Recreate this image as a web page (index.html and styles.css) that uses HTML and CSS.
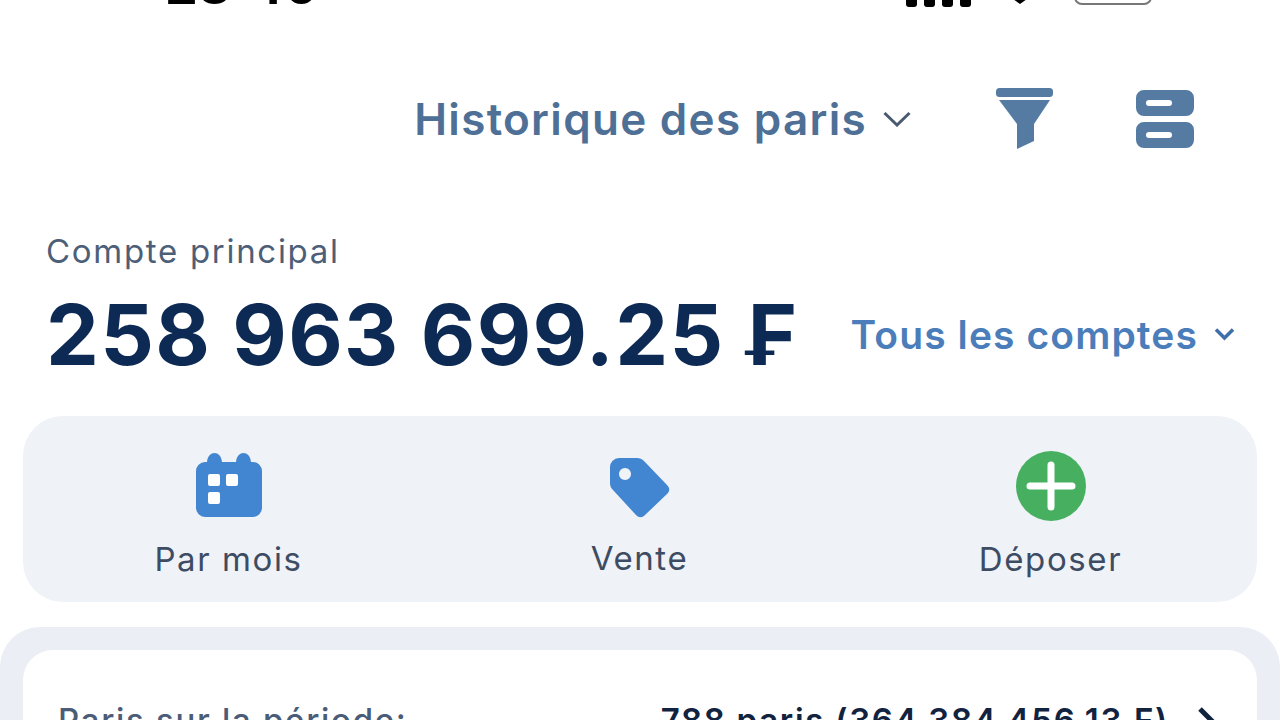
FILE: index.html
```html
<!DOCTYPE html>
<html>
  <head>
    <title>Historique des paris</title>
    <link rel="stylesheet" href="styles.css">
  </head>
  <body>
    <div class="status-bar">
      <span class="status-time">23:40</span>
      <div class="status-right">
        <div class="signal"><i></i><i></i><i></i><i></i></div>
        <svg class="wifi" width="20" height="5" viewBox="0 0 20 5"><path d="M3 0h14l-7 5z" fill="#000"/></svg>
        <div class="battery"></div>
      </div>
    </div>

    <header class="top-bar">
      <div class="top-title">
        <h1>Historique des paris</h1>
        <svg width="28" height="16" viewBox="0 0 28 16"><path d="M1.500 2 14 14 26.500 2" fill="none" stroke="#4a5a70" stroke-width="3"/></svg>
      </div>
      <svg class="filter-icon" width="58" height="62" viewBox="0 0 58 62">
        <rect x="0" y="0" width="57" height="9" rx="3.500" fill="#557ba3"/>
        <path d="M3 12h51L38 36v17l-17 8V36z" fill="#557ba3"/>
      </svg>
      <svg class="stack-icon" width="58" height="58" viewBox="0 0 58 58">
        <path fill-rule="evenodd" fill="#557ba3" d="M8 0h42a8 8 0 0 1 8 8v10a8 8 0 0 1-8 8H8a8 8 0 0 1-8-8V8a8 8 0 0 1 8-8zM13 10a3 3 0 0 0 0 6h20a3 3 0 0 0 0-6zM8 32h42a8 8 0 0 1 8 8v10a8 8 0 0 1-8 8H8a8 8 0 0 1-8-8V40a8 8 0 0 1 8-8zM13 42a3 3 0 0 0 0 6h20a3 3 0 0 0 0-6z"/>
      </svg>
    </header>

    <section class="account">
      <p class="account-label">Compte principal</p>
      <div class="account-row">
        <span class="balance">258 963 699.25 ₣</span>
        <div class="account-switch">
          <span>Tous les comptes</span>
          <svg width="21" height="14" viewBox="0 0 21 14"><path d="M2 2.500 10.500 11 19 2.500" fill="none" stroke="#3f6fa8" stroke-width="3.500"/></svg>
        </div>
      </div>
    </section>

    <section class="actions">
      <div class="action action-month">
        <svg width="66" height="64" viewBox="0 0 66 64">
          <path fill="#4285d0" d="M9 9h2c1-12 14-12 15 0h14c1-12 14-12 15 0h2a9 9 0 0 1 9 9v37a9 9 0 0 1-9 9H9a9 9 0 0 1-9-9V18a9 9 0 0 1 9-9z"/>
          <rect x="12" y="21" width="12" height="12" rx="2" fill="#fff"/>
          <rect x="30" y="21" width="12" height="12" rx="2" fill="#fff"/>
          <rect x="12" y="39" width="12" height="12" rx="2" fill="#fff"/>
        </svg>
        <span>Par mois</span>
      </div>
      <div class="action action-sale">
        <svg width="60" height="60" viewBox="0 0 60 60">
          <path fill="#4285d0" fill-rule="evenodd" d="M9 0h18c3 0 5 1 7 3l23 24c3 3 3 6 0 9L35 57c-3 3-6 3-9 0L3 32c-2-2-3-4-3-7V9a9 9 0 0 1 9-9zM15 10a6 6 0 1 0 .01 0z"/>
        </svg>
        <span>Vente</span>
      </div>
      <div class="action action-deposit">
        <svg width="70" height="70" viewBox="0 0 70 70">
          <circle cx="35" cy="35" r="35" fill="#46b060"/>
          <path d="M35 14v42M14 35h42" stroke="#fff" stroke-width="7" stroke-linecap="round"/>
        </svg>
        <span>Déposer</span>
      </div>
    </section>

    <section class="summary">
      <div class="summary-card">
        <span class="summary-label">Paris sur la période:</span>
        <div class="summary-value">
          <span>788 paris (364 384 456.13 ₣)</span>
          <svg width="22" height="36" viewBox="0 0 22 36"><path d="M3 3 18 18 3 33" fill="none" stroke="#12233f" stroke-width="5"/></svg>
        </div>
      </div>
    </section>
  </body>
</html>
```

FILE: styles.css
```css
* {
  box-sizing: border-box;
}

html, body {
  margin: 0;
  height: 720px;
  overflow: hidden;
}

body {
  font-family: Inter, "Noto Sans", sans-serif;
  background-color: #fff;
}

.status-bar {
  height: 8px;
  overflow: hidden;
  display: flex;
  justify-content: space-between;
  align-items: flex-end;
  padding: 0 128px 0 165px;
}

.status-time {
  font-size: 52px;
  font-weight: 700;
  line-height: 44px;
  color: #000;
  flex: none;
}

.status-right {
  display: flex;
  align-items: flex-end;
  height: 8px;
}

.signal {
  display: flex;
  gap: 7px;
  margin-right: 39px;
  margin-bottom: 1px;
}

.signal i {
  display: block;
  width: 11px;
  height: 12px;
  border-radius: 3px;
  background-color: #000;
}

.wifi {
  margin-right: 44px;
  margin-bottom: 4px;
}

.battery {
  width: 78px;
  height: 30px;
  border: 2px solid #777;
  border-radius: 8px;
  margin-bottom: 3px;
  flex: none;
}

.top-bar {
  display: flex;
  justify-content: flex-end;
  align-items: center;
  padding: 80px 86px 0 0;
}

.top-title {
  display: flex;
  align-items: center;
  gap: 16px;
  margin-right: 85px;
}

.top-title h1 {
  margin: 0;
  font-size: 44px;
  font-weight: 600;
  letter-spacing: 1.3px;
  color: #4f7096;
}

.stack-icon {
  margin-left: 82px;
}

.account {
  padding: 81px 0 0 46px;
}

.account-label {
  margin: 0;
  font-size: 33px;
  line-height: 40px;
  letter-spacing: 1.7px;
  color: #4d5f78;
}

.account-row {
  display: flex;
  align-items: center;
  margin-top: 14px;
}

.balance {
  font-size: 84px;
  font-weight: 700;
  line-height: 100px;
  letter-spacing: 1.3px;
  color: #0d2a55;
  white-space: nowrap;
}

.account-switch {
  display: flex;
  align-items: center;
  gap: 16px;
  margin-left: 52px;
  margin-top: -2px;
  font-size: 39px;
  font-weight: 600;
  letter-spacing: 1.1px;
  color: #4a7dba;
  white-space: nowrap;
}

.actions {
  display: flex;
  height: 186px;
  margin: 31px 23px 0;
  border-radius: 40px;
  background-color: #eff2f7;
}

.action {
  display: flex;
  flex-direction: column;
  align-items: center;
  width: 411px;
  height: 186px;
  font-size: 33px;
  letter-spacing: 1.6px;
  color: #3d4c63;
}

.action span {
  line-height: 40px;
}

.action-month {
  padding-top: 37px;
}

.action-month span {
  margin-top: 22px;
}

.action-sale {
  padding-top: 42px;
}

.action-sale span {
  margin-top: 20px;
}

.action-deposit {
  padding-top: 35px;
}

.action-deposit span {
  margin-top: 18px;
}

.summary {
  margin-top: 25px;
  height: 93px;
  overflow: hidden;
  padding: 23px 23px 0;
  border-radius: 40px 40px 0 0;
  background-color: #eceef5;
}

.summary-card {
  display: flex;
  justify-content: space-between;
  height: 120px;
  padding: 50px 38px 0 35px;
  border-radius: 30px;
  background-color: #fff;
  font-size: 33px;
  line-height: 40px;
  letter-spacing: 1.7px;
}

.summary-label {
  color: #4a5c78;
  font-weight: 500;
}

.summary-value {
  display: flex;
  gap: 28px;
  font-weight: 600;
  color: #12233f;
}

.summary-value svg {
  margin-top: 6px;
}
```
